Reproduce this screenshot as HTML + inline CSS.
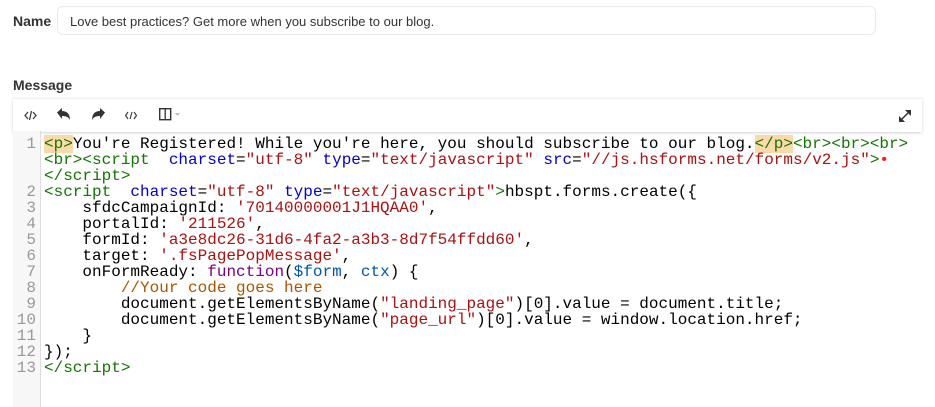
<!DOCTYPE html>
<html><head><style>
body{margin:0;background:#fff;width:935px;height:407px;overflow:hidden;font-family:"Liberation Sans",sans-serif;position:relative}
.lbl{position:absolute;left:13px;font-size:14px;color:#333;font-weight:bold}
.inp{position:absolute;left:57px;top:6px;width:819px;height:29px;border:1px solid #e6e9ee;border-radius:6px;box-sizing:border-box;font-size:13px;color:#333;padding:7px 12px;line-height:15px}
.tb{position:absolute;left:13px;top:98px;width:909px;height:33px;background:#fff;box-shadow:0 1px 3px rgba(0,0,0,.18);border-top:1px solid #f0f0f0}
.gut{position:absolute;left:13px;top:131px;width:27px;height:276px;background:#f7f7f7;border-right:1px solid #ddd}
pre{margin:0;font-family:"Liberation Mono",monospace;font-size:16px;line-height:16px;position:absolute;top:136px}
.nums{left:13px;width:23px;text-align:right;color:#999}
.code{left:44px;color:#000}
.t{color:#170}.a{color:#00c}.s{color:#a11}.k{color:#708}.v{color:#05a}.c{color:#a50}
.m{background:#fcd9a8}
</style></head><body>
<div class="lbl" style="top:13px">Name</div>
<div class="inp">Love best practices? Get more when you subscribe to our blog.</div>
<div class="lbl" style="top:77px">Message</div>
<div class="tb">
<svg style="position:absolute;left:11px;top:11px" width="13" height="11" viewBox="0 0 13 11"><path d="M4 2L1 5.5 4 9M9 2l3 3.5L9 9M7.5 1L5.5 10" stroke="#333" fill="none" stroke-width="1.2"/></svg>
<svg style="position:absolute;left:44px;top:9px" width="14" height="13" viewBox="0 0 14 13"><path d="M0 4.5L5 0v3c5 0 8 3 8 9-1.5-3-4-4-8-4v3z" fill="#333"/></svg>
<svg style="position:absolute;left:78px;top:9px" width="14" height="13" viewBox="0 0 14 13"><path d="M14 4.5L9 0v3c-5 0-8 3-8 9 1.5-3 4-4 8-4v3z" fill="#333"/></svg>
<svg style="position:absolute;left:112px;top:12px" width="12" height="9" viewBox="0 0 12 9"><path d="M3 1L0.5 4.5 3 8M9 1l2.5 3.5L9 8M7 1L5 8" stroke="#333" fill="none" stroke-width="1.1"/></svg>
<svg style="position:absolute;left:146px;top:9px" width="22" height="13" viewBox="0 0 22 13"><rect x="0.7" y="0.7" width="11" height="11" fill="none" stroke="#333" stroke-width="1.4"/><path d="M6.2 1v11" stroke="#333" stroke-width="1.3"/><path d="M16 5h5l-2.5 3z" fill="#bbb"/></svg>
<svg style="position:absolute;left:886px;top:11px" width="12" height="12" viewBox="0 0 12 12"><path d="M7 0h5v5zM0 7v5h5zM10 2L2 10" stroke="#333" fill="#333" stroke-width="1.5"/></svg>
</div>
<div class="gut"></div>
<pre class="nums">1


2
3
4
5
6
7
8
9
10
11
12
13</pre>
<pre class="code"><span class="t m">&lt;p&gt;</span>You're Registered! While you're here, you should subscribe to our blog.<span class="t m">&lt;/p&gt;</span><span class="t">&lt;br&gt;&lt;br&gt;&lt;br&gt;</span>
<span class="t">&lt;br&gt;&lt;script</span>  <span class="a">charset</span>=<span class="s">"utf-8"</span> <span class="a">type</span>=<span class="s">"text/javascript"</span> <span class="a">src</span>=<span class="s">"//js.hsforms.net/forms/v2.js"</span><span class="t">&gt;</span><span style="color:#e22">•</span>
<span class="t">&lt;/script&gt;</span>
<span class="t">&lt;script</span>  <span class="a">charset</span>=<span class="s">"utf-8"</span> <span class="a">type</span>=<span class="s">"text/javascript"</span><span class="t">&gt;</span>hbspt.forms.create({
    sfdcCampaignId: <span class="s">'70140000001J1HQAA0'</span>,
    portalId: <span class="s">'211526'</span>,
    formId: <span class="s">'a3e8dc26-31d6-4fa2-a3b3-8d7f54ffdd60'</span>,
    target: <span class="s">'.fsPagePopMessage'</span>,
    onFormReady: <span class="k">function</span>(<span class="v">$form</span>, <span class="v">ctx</span>) {
        <span class="c">//Your code goes here</span>
        document.getElementsByName(<span class="s">"landing_page"</span>)[0].value = document.title;
        document.getElementsByName(<span class="s">"page_url"</span>)[0].value = window.location.href;
    }
});
<span class="t">&lt;/script&gt;</span></pre>
</body></html>
